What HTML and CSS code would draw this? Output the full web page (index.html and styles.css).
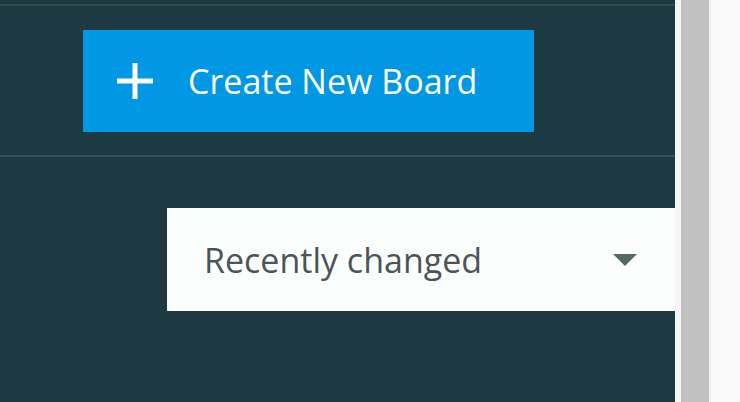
FILE: index.html
```html
<!DOCTYPE html>
<html>
	<head>
		<title>Boards</title>
		<link rel="stylesheet" href="styles.css">
	</head>
	<body>
		<div class="page">
			<div class="main">
				<div class="topbar"></div>
				<div class="actions">
					<button class="create-button">
						<svg class="plus" width="36" height="36" viewBox="0 0 36 36">
							<path d="M18 0 V36 M0 18 H36" stroke="#ffffff" stroke-width="5" fill="none"/>
						</svg>
						<span>Create New Board</span>
					</button>
				</div>
				<div class="sortbar">
					<div class="sort-select">
						<span>Recently changed</span>
						<svg class="caret" width="24" height="12" viewBox="0 0 24 12">
							<path d="M0 0 H24 L12 12 Z" fill="#566566"/>
						</svg>
					</div>
				</div>
			</div>
			<div class="gutter"></div>
			<div class="scrollbar"></div>
			<div class="side"></div>
		</div>
	</body>
</html>
```

FILE: styles.css
```css
body {
margin: 0;
font-family: "Open Sans", "Noto Sans", sans-serif;
background-color: #fafafa;
}

.page {
display: flex;
height: 402px;
overflow: hidden;
}

.main {
width: 675px;
flex-shrink: 0;
background-color: #1d3a42;
overflow: hidden;
}

.topbar {
height: 4px;
border-bottom: 2px solid #344c54;
}

.actions {
padding: 24px 0 23px 83px;
border-bottom: 2px solid #34505a;
}

.create-button {
display: flex;
align-items: center;
width: 451px;
height: 102px;
padding: 0 0 0 34px;
border: none;
background-color: #0097e4;
color: #ffffff;
font-family: "Open Sans", "Noto Sans", sans-serif;
font-size: 34px;
cursor: pointer;
}

.plus {
margin-right: 35px;
}

.sortbar {
padding: 51px 0 0 167px;
}

.sort-select {
box-sizing: border-box;
display: flex;
align-items: center;
width: 560px;
height: 103px;
padding: 0 90px 0 37px;
background-color: #fcfefe;
color: #4b5558;
font-size: 34px;
}

.sort-select span {
flex: 1;
}

.gutter {
width: 6px;
flex-shrink: 0;
background-color: #f4f6f6;
}

.scrollbar {
width: 28px;
flex-shrink: 0;
background-color: #c1c1c1;
}

.side {
flex: 1;
background-color: #fafafa;
border-left: 2px solid #eeeeee;
}
```
